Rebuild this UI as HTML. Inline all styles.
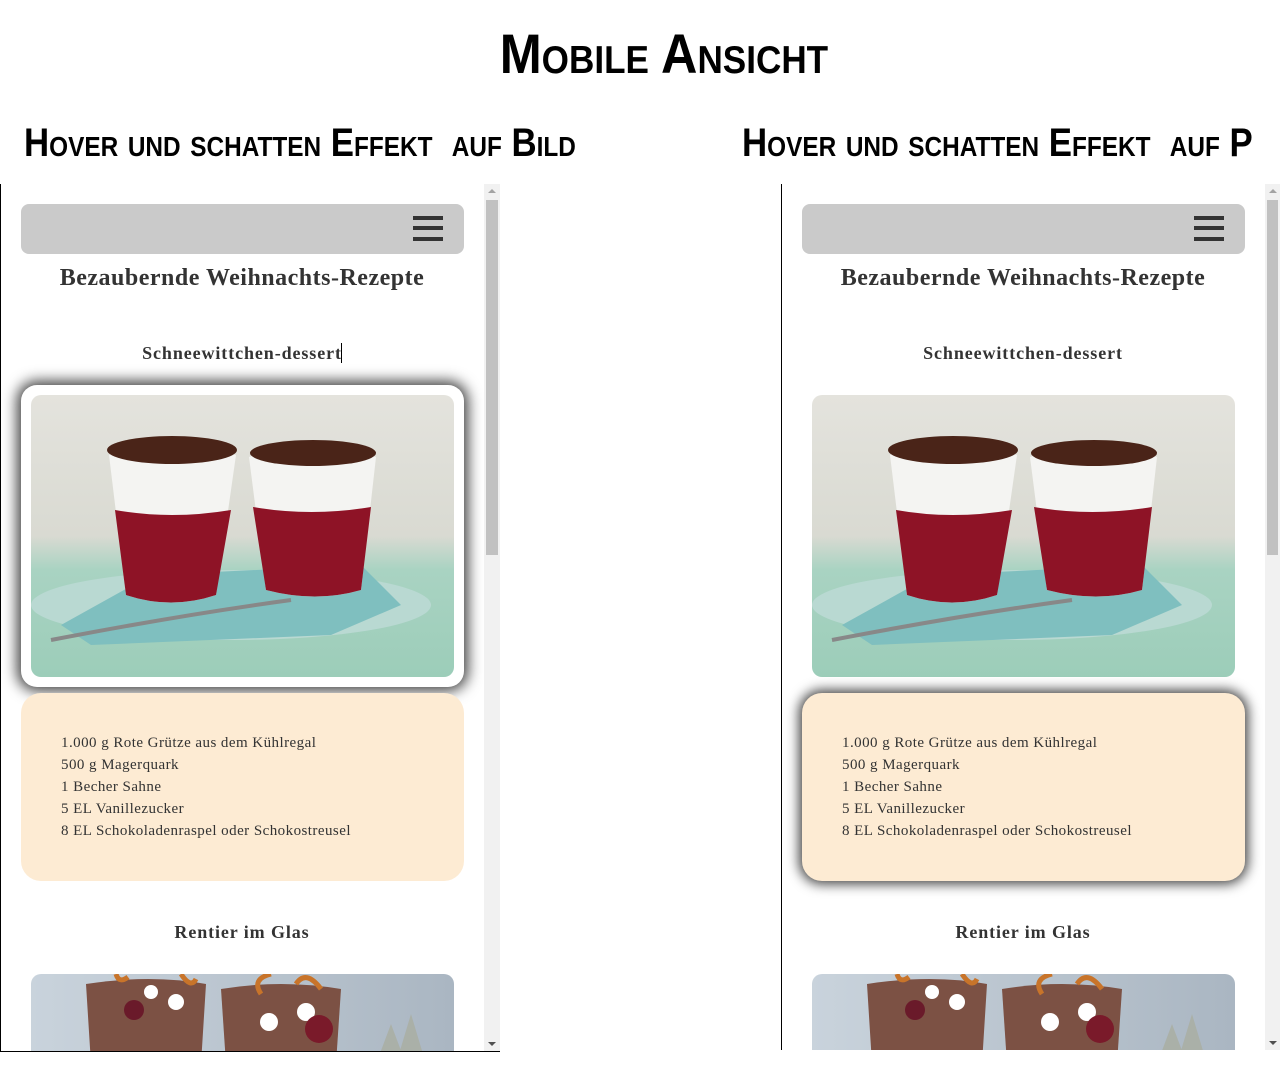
<!DOCTYPE html>
<html><head><meta charset="utf-8">
<style>
*{margin:0;padding:0;box-sizing:border-box}
body{width:1280px;height:1080px;background:#fff;position:relative;overflow:hidden;font-family:"Liberation Serif",serif}
.h{position:absolute;font-family:"Liberation Sans Narrow","Liberation Sans",sans-serif;font-weight:bold;font-variant:small-caps;color:#000;white-space:pre;line-height:1}
.panel{position:absolute;top:184px;overflow:hidden;background:#fff}
.nav{position:absolute;left:21px;top:20px;width:443px;height:50px;background:#cacaca;border-radius:8px}
.nav i{position:absolute;left:392px;width:30px;height:4px;background:#333}
.t1{position:absolute;left:0;width:484px;text-align:center;font-weight:bold;font-size:24px;letter-spacing:0.5px;color:#333;top:81px}
.t2{position:absolute;left:0;width:484px;text-align:center;font-weight:bold;font-size:18px;letter-spacing:0.9px;color:#333}
.img{position:absolute;left:31px;width:423px;height:282px;border-radius:10px;overflow:hidden}
.ing{position:absolute;left:21px;top:509px;width:443px;height:188px;background:#fdebd3;border-radius:20px;padding:39px 0 0 40px;font-size:15px;letter-spacing:0.45px;line-height:22px;color:#333}
.sb{position:absolute;right:0;top:0;width:16px;height:100%;background:#f1f1f1}
.sb .th{position:absolute;left:2px;top:16px;width:12px;height:355px;background:#c1c1c1}
.sb .up{position:absolute;left:4px;top:5px;border:4px solid transparent;border-bottom:4px solid #a3a3a3;border-top:0}
.sb .dn{position:absolute;left:4px;bottom:5px;border:4px solid transparent;border-top:4px solid #505050;border-bottom:0}
</style></head><body>
<div class="h" style="left:0;width:1328px;text-align:center;top:26px;font-size:56px;transform:scaleX(0.9);transform-origin:663px 0">Mobile Ansicht</div>
<div class="h" style="left:24px;top:123px;font-size:40px;transform:scaleX(0.87);transform-origin:0 0">Hover und schatten Effekt  auf Bild</div>
<div class="h" style="left:742px;top:123px;font-size:40px;transform:scaleX(0.87);transform-origin:0 0">Hover und schatten Effekt  auf P</div>

<svg width="0" height="0" style="position:absolute">
<defs>
<linearGradient id="bg" x1="0" y1="0" x2="0" y2="1"><stop offset="0" stop-color="#e4e3dd"/><stop offset="0.5" stop-color="#d9dad2"/><stop offset="0.62" stop-color="#a9d3c2"/><stop offset="1" stop-color="#9ccdb9"/></linearGradient>
<linearGradient id="bg2" x1="0" y1="0" x2="1" y2="0"><stop offset="0" stop-color="#c9d3dc"/><stop offset="1" stop-color="#aab6c2"/></linearGradient>
<g id="dessert">
<rect width="423" height="282" fill="url(#bg)"/>
<ellipse cx="200" cy="210" rx="200" ry="35" fill="#b9d9d2"/>
<path d="M30 230 L120 180 L330 170 L370 210 L300 240 L60 250Z" fill="#7fbfbf"/>
<path d="M78 60 Q130 35 205 60 L185 200 Q140 215 95 200Z" fill="#f4f4f2"/>
<path d="M84 115 Q140 125 200 115 L185 200 Q140 215 95 200Z" fill="#8e1326"/>
<ellipse cx="141" cy="55" rx="65" ry="14" fill="#4a2418"/>
<path d="M218 62 Q280 40 345 62 L330 195 Q285 208 235 195Z" fill="#f4f4f2"/>
<path d="M222 112 Q280 122 340 112 L330 195 Q285 208 235 195Z" fill="#8e1326"/>
<ellipse cx="282" cy="58" rx="63" ry="13" fill="#4a2418"/>
<path d="M20 245 Q150 220 260 205" stroke="#888" stroke-width="4" fill="none"/>
</g>
<g id="rentier">
<rect width="423" height="90" fill="url(#bg2)"/>
<path d="M55 10 Q120 0 175 10 L170 90 L60 90Z" fill="#7c5144"/>
<path d="M190 15 Q250 5 310 15 L305 90 L195 90Z" fill="#7c5144"/>
<circle cx="120" cy="18" r="7" fill="#fff"/><circle cx="145" cy="28" r="8" fill="#fff"/>
<circle cx="238" cy="48" r="9" fill="#fff"/><circle cx="275" cy="38" r="9" fill="#fff"/>
<circle cx="288" cy="55" r="14" fill="#7a1a2a"/><circle cx="103" cy="36" r="10" fill="#6a1a2a"/>
<path d="M85 0 Q88 10 97 3 M150 0 Q160 15 165 5 M230 20 Q220 5 240 0 M265 10 Q275 -5 290 15" stroke="#c8742a" stroke-width="5" fill="none"/>
<path d="M345 90 L360 50 L375 90Z M365 90 L380 40 L395 90Z" fill="#aab0a8"/>
</g>
</defs></svg>

<!-- left panel -->
<div class="panel" style="left:0;width:500px;height:868px;border-left:1px solid #000;border-bottom:1px solid #000">
<div style="position:relative;left:-1px;width:500px;height:867px">
<div class="nav"><i style="top:12px"></i><i style="top:22px"></i><i style="top:33px"></i></div>
<div class="t1">Bezaubernde Weihnachts-Rezepte</div>
<div class="t2" style="top:159px">Schneewittchen-dessert<span style="display:inline-block;width:1px;height:20px;background:#000;vertical-align:-4px;margin-left:-1px"></span></div>
<div style="position:absolute;left:21px;top:201px;width:443px;height:302px;background:#fff;border-radius:16px;box-shadow:0 0 14px 4px rgba(0,0,0,.75)"></div>
<svg class="img" style="top:211px" viewBox="0 0 423 282"><use href="#dessert"/></svg>
<div class="ing">1.000 g Rote Grütze aus dem Kühlregal<br>500 g Magerquark<br>1 Becher Sahne<br>5 EL Vanillezucker<br>8 EL Schokoladenraspel oder Schokostreusel</div>
<div class="t2" style="top:738px">Rentier im Glas</div>
<svg class="img" style="top:790px;height:90px;border-radius:10px 10px 0 0" viewBox="0 0 423 90"><use href="#rentier"/></svg>
<div class="sb"><div class="th"></div><div class="up"></div><div class="dn"></div></div>
</div></div>

<!-- right panel -->
<div class="panel" style="left:781px;width:499px;height:866px;border-left:1px solid #000">
<div style="position:relative;left:-1px;width:499px;height:866px">
<div class="nav"><i style="top:12px"></i><i style="top:22px"></i><i style="top:33px"></i></div>
<div class="t1">Bezaubernde Weihnachts-Rezepte</div>
<div class="t2" style="top:159px">Schneewittchen-dessert</div>
<svg class="img" style="top:211px" viewBox="0 0 423 282"><use href="#dessert"/></svg>
<div class="ing" style="box-shadow:0 0 12px 3px rgba(0,0,0,.75)">1.000 g Rote Grütze aus dem Kühlregal<br>500 g Magerquark<br>1 Becher Sahne<br>5 EL Vanillezucker<br>8 EL Schokoladenraspel oder Schokostreusel</div>
<div class="t2" style="top:738px">Rentier im Glas</div>
<svg class="img" style="top:790px;height:90px;border-radius:10px 10px 0 0" viewBox="0 0 423 90"><use href="#rentier"/></svg>
<div class="sb" style="width:15px"><div class="th" style="width:11px"></div><div class="up"></div><div class="dn"></div></div>
</div></div>
</body></html>
